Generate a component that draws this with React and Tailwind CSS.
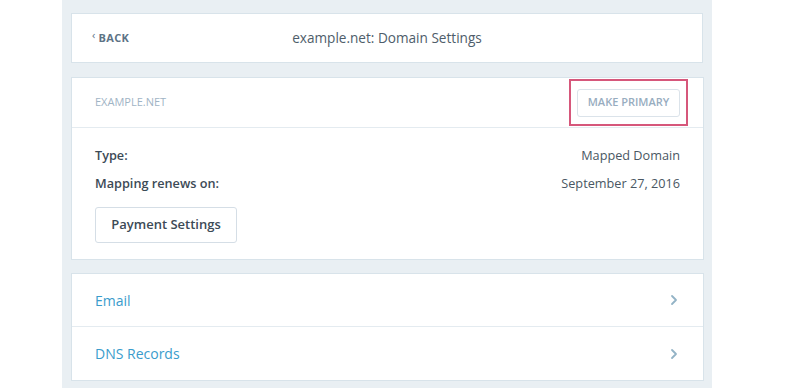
const FONT = { fontFamily: '"Open Sans", "Noto Sans", Arial, sans-serif' }

function Chevron({ className }) {
  return (
    <svg className={className} width="8" height="12" viewBox="0 0 8 12" fill="none">
      <path d="M2 2l4 4-4 4" stroke="currentColor" strokeWidth="1.8" strokeLinecap="round" strokeLinejoin="round" />
    </svg>
  )
}

function NavRow({ label, last }) {
  return (
    <div className={`flex items-center justify-between h-[53px] pl-[23px] pr-[25px] ${last ? '' : 'border-b border-[#e4ebf0]'}`}>
      <span className="text-[14px] text-[#3a9ccc]">{label}</span>
      <Chevron className="text-[#93b3c6]" />
    </div>
  )
}

export default function App() {
  return (
    <div className="w-[800px] h-[388px] bg-white overflow-hidden" style={FONT}>
      <div className="ml-[62px] w-[650px] h-full bg-[#e9eff3] px-[10px] pt-[14px] flex flex-col">
        <div className="relative flex items-center h-[48px] bg-white shadow-[0_0_0_1px_rgba(200,215,225,0.5)] pr-[9px]">
          <div className="flex items-center gap-[3px] pl-[20px] text-[11px] font-bold text-[#5d7385] tracking-[0.3px]">
            <span className="text-[11px] -mt-[6px] font-normal">&lsaquo;</span>
            <span>BACK</span>
          </div>
          <div className="absolute inset-0 flex items-center justify-center text-[13.6px] text-[#4e5d6a]">
            example.net: Domain Settings
          </div>
        </div>

        <div className="mt-[16px] bg-white shadow-[0_0_0_1px_rgba(200,215,225,0.5)] mr-[-1px]">
          <div className="flex items-center justify-between h-[50px] pl-[23px] pr-[15px] border-b border-[#e4ebf0]">
            <span className="text-[11px] text-[#9fb4c5]">EXAMPLE.NET</span>
            <div className="border-2 border-[#d6577b] px-[6px] py-[7px]">
              <button className="h-[28px] w-[103px] border border-[#dbe3ea] rounded-[3px] text-[11px] font-semibold text-[#98adbf] bg-white">
                MAKE PRIMARY
              </button>
            </div>
          </div>
          <div className="pl-[23px] pr-[23px] pt-[17px] pb-[16px] text-[13px] text-[#3c4a56]">
            <div className="flex justify-between leading-[20px]">
              <span className="font-semibold text-[12.7px]">Type:</span>
              <span className="text-[#4a5763] text-[12.7px]">Mapped Domain</span>
            </div>
            <div className="flex justify-between leading-[20px] mt-[8px]">
              <span className="font-semibold text-[12.7px]">Mapping renews on:</span>
              <span className="text-[#4a5763] text-[12.7px]">September 27, 2016</span>
            </div>
            <button className="mt-[14px] h-[36px] w-[142px] border border-[#d5dee6] rounded-[3px] bg-white font-semibold text-[13px] text-[#3c4a56]">
              Payment Settings
            </button>
          </div>
        </div>

        <div className="mt-[15px] bg-white shadow-[0_0_0_1px_rgba(200,215,225,0.5)] mr-[-1px]">
          <NavRow label="Email" />
          <NavRow label="DNS Records" last />
        </div>
      </div>
    </div>
  )
}
